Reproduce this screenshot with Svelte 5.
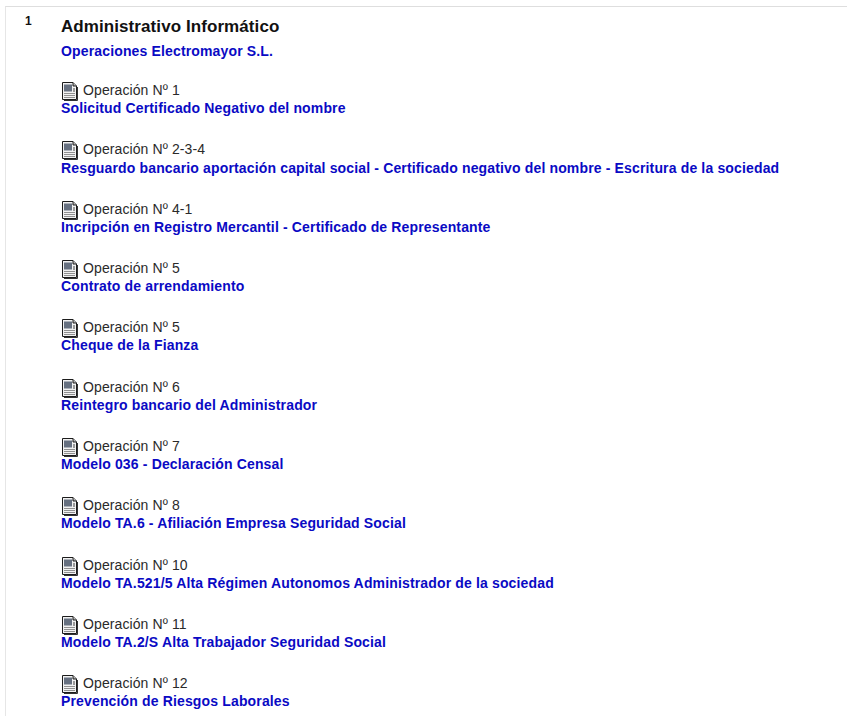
<script lang="ts">
  const operations = [
    { label: 'Operación Nº 1', title: 'Solicitud Certificado Negativo del nombre' },
    { label: 'Operación Nº 2-3-4', title: 'Resguardo bancario aportación capital social - Certificado negativo del nombre - Escritura de la sociedad' },
    { label: 'Operación Nº 4-1', title: 'Incripción en Registro Mercantil - Certificado de Representante' },
    { label: 'Operación Nº 5', title: 'Contrato de arrendamiento' },
    { label: 'Operación Nº 5', title: 'Cheque de la Fianza' },
    { label: 'Operación Nº 6', title: 'Reintegro bancario del Administrador' },
    { label: 'Operación Nº 7', title: 'Modelo 036 - Declaración Censal' },
    { label: 'Operación Nº 8', title: 'Modelo TA.6 - Afiliación Empresa Seguridad Social' },
    { label: 'Operación Nº 10', title: 'Modelo TA.521/5 Alta Régimen Autonomos Administrador de la sociedad' },
    { label: 'Operación Nº 11', title: 'Modelo TA.2/S Alta Trabajador Seguridad Social' },
    { label: 'Operación Nº 12', title: 'Prevención de Riesgos Laborales' }
  ];
</script>

<div class="page">
  <div class="panel">
    <div class="number">1</div>
    <div class="content">
      <h1>Administrativo Informático</h1>
      <a class="company" href="#top">Operaciones Electromayor S.L.</a>
      <ul>
        {#each operations as op}
          <li>
            <div class="op-label">
              <svg class="doc" width="18" height="19" viewBox="0 0 18 19" aria-hidden="true">
                <path d="M1.5 .5H12L15.5 4V17.5H1.5Z" fill="#f2f2f2" stroke="#1c1c1c" />
                <path d="M12 .5V4H15.5" fill="#bbb" stroke="#1c1c1c" />
                <rect x="3" y="2.5" width="8" height="7" fill="#667080" />
                <rect x="12" y="6" width="2" height="4" fill="#9a9a9a" />
                <path d="M3 11.5H14M3 13.5H14M3 15.5H14" stroke="#909090" />
                <path d="M16.5 5V18.5H3" fill="none" stroke="#333" />
              </svg>
              <span>{op.label}</span>
            </div>
            <a class="op-link" href="#top">{op.title}</a>
          </li>
        {/each}
      </ul>
    </div>
  </div>
</div>

<style>
  :global(body) {
    margin: 0;
    background: #fff;
    overflow: hidden;
  }

  .page {
    height: 716px;
    padding: 6px 0 0 5px;
    box-sizing: border-box;
    overflow: hidden;
    font-family: "Liberation Sans", Arial, sans-serif;
  }

  .panel {
    display: flex;
    border-top: 1px solid #dedede;
    border-left: 1px solid #e6e6e6;
    padding-top: 7px;
    height: 100%;
  }

  .number {
    width: 55px;
    padding-left: 19px;
    box-sizing: border-box;
    font-size: 12px;
    font-weight: bold;
    color: #111;
  }

  .content {
    flex: 1;
  }

  h1 {
    margin: 0;
    font-size: 17px;
    letter-spacing: 0.08px;
    line-height: 26px;
    font-weight: bold;
    color: #111;
  }

  a {
    color: #0a0ac4;
    font-weight: bold;
    font-size: 14px;
    letter-spacing: 0.15px;
    text-decoration: none;
  }

  .company {
    display: block;
    line-height: 18px;
    margin-top: 2px;
  }

  ul {
    list-style: none;
    margin: 20.25px 0 0;
    padding: 0;
    display: flex;
    flex-direction: column;
    gap: 22.3px;
  }

  li {
    height: 37px;
  }

  .op-label {
    display: flex;
    align-items: center;
    gap: 4px;
    height: 19px;
    margin: 0.4px 0 -0.4px;
    font-size: 14px;
    letter-spacing: 0.1px;
    color: #2a2a2a;
  }

  .doc {
    flex-shrink: 0;
    margin-top: 3px;
  }

  .op-link {
    display: block;
    line-height: 18px;
  }
</style>
